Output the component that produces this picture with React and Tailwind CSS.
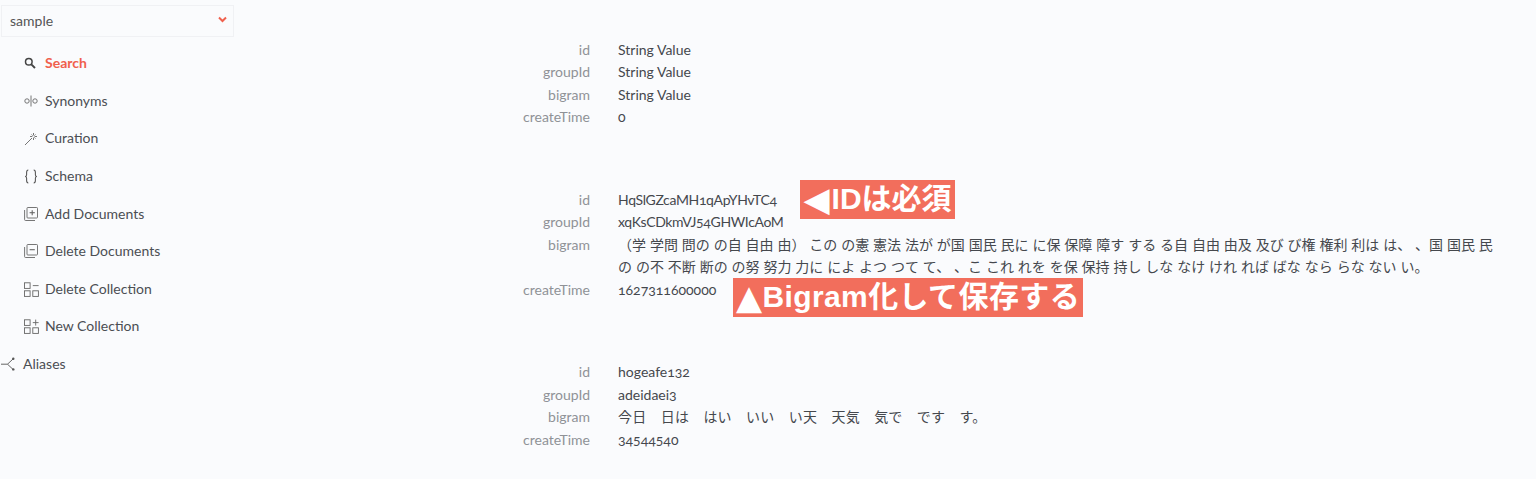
import React from 'react';

const SearchIcon = () => (
  <svg width="12" height="12" viewBox="0 0 12 12" fill="none" stroke="#444" strokeWidth="1.5">
    <circle cx="4.8" cy="4.8" r="3.3" />
    <path d="M7.3 7.3 L11 11" strokeWidth="1.9" />
  </svg>
);

const SynonymsIcon = () => (
  <svg width="14" height="14" viewBox="0 0 14 14" fill="none" stroke="#666" strokeWidth="0.9">
    <circle cx="3" cy="7" r="2.2" />
    <circle cx="11" cy="7" r="2.2" />
    <path d="M7 1.5 V12.5" />
  </svg>
);

const WandIcon = () => (
  <svg width="14" height="14" viewBox="0 0 14 14" fill="none" stroke="#666" strokeWidth="0.9">
    <path d="M1 13 L8 6" />
    <path d="M9.5 1 V3.4 M9.5 5.6 V8 M6 4.5 H8.4 M10.6 4.5 H13 M7.5 2.5 L8.6 3.6 M11.5 2.5 L10.4 3.6 M11.5 6.5 L10.4 5.4" />
  </svg>
);

const BracesIcon = () => (
  <svg width="14" height="15" viewBox="0 0 13 14" fill="none" stroke="#555" strokeWidth="1">
    <path d="M4 1 C2.4 1 2.4 2 2.4 3.2 V5.4 C2.4 6.4 1.8 7 1 7 C1.8 7 2.4 7.6 2.4 8.6 V10.8 C2.4 12 2.4 13 4 13" />
    <path d="M9 1 C10.6 1 10.6 2 10.6 3.2 V5.4 C10.6 6.4 11.2 7 12 7 C11.2 7 10.6 7.6 10.6 8.6 V10.8 C10.6 12 10.6 13 9 13" />
  </svg>
);

const DocsIcon = ({ plus }) => (
  <svg width="14" height="14" viewBox="0 0 14 14" fill="none" stroke="#666" strokeWidth="0.9">
    <rect x="3" y="0.5" width="10.5" height="10.5" rx="0.8" />
    <path d="M0.6 3 V12.6 C0.6 13.2 0.9 13.5 1.5 13.5 H11" />
    <path d="M5.6 5.7 H10.8" strokeWidth="1.1" />
    {plus && <path d="M8.2 3.2 V8.2" strokeWidth="1.1" />}
  </svg>
);

const CollectionIcon = ({ plus }) => (
  <svg width="15" height="15" viewBox="0 0 15 15" fill="none" stroke="#666" strokeWidth="0.9">
    <rect x="0.5" y="0.8" width="5.6" height="5.6" />
    <rect x="0.5" y="8.8" width="5.6" height="5.6" />
    <rect x="8.8" y="8.8" width="5.6" height="5.6" />
    <path d="M8.8 3.6 H14.6" />
    {plus && <path d="M11.7 0.6 V6.6" />}
  </svg>
);

const AliasIcon = () => (
  <svg width="16" height="14" viewBox="0 0 16 14" fill="none" stroke="#555" strokeWidth="0.9">
    <path d="M0 7.2 H6.5 L12 2 M6.5 7.2 L12 12.4" />
    <circle cx="12.3" cy="1.8" r="1.2" fill="#555" stroke="none" />
    <circle cx="12.3" cy="12.4" r="1.2" fill="#555" stroke="none" />
  </svg>
);

const navItems = [
  { label: 'Search', icon: <SearchIcon />, active: true },
  { label: 'Synonyms', icon: <SynonymsIcon /> },
  { label: 'Curation', icon: <WandIcon /> },
  { label: 'Schema', icon: <BracesIcon /> },
  { label: 'Add Documents', icon: <DocsIcon plus /> },
  { label: 'Delete Documents', icon: <DocsIcon /> },
  { label: 'Delete Collection', icon: <CollectionIcon /> },
  { label: 'New Collection', icon: <CollectionIcon plus /> },
];

const docs = [
  { id: 'String Value', groupId: 'String Value', bigram: 'String Value', createTime: '0' },
  {
    id: 'HqSlGZcaMH1qApYHvTC4',
    groupId: 'xqKsCDkmVJ54GHWIcAoM',
    bigram: '（学 学問 問の の自 自由 由） この の憲 憲法 法が が国 国民 民に に保 保障 障す する る自 自由 由及 及び び権 権利 利は は、 、国 国民 民 の の不 不断 断の の努 努力 力に によ よつ つて て、 、こ これ れを を保 保持 持し しな なけ けれ れば ばな なら らな ない い。',
    createTime: '1627311600000',
    idClass: 'tracking-[-0.35px]',
    bigramClass: '[word-spacing:0.3px]',
  },
  {
    id: 'hogeafe132',
    groupId: 'adeidaei3',
    bigram: '今日　日は　はい　いい　い天　天気　気で　です　す。',
    createTime: '34544540',
    bigramClass: 'tracking-[0.23px]',
  },
];

const Row = ({ label, children }) => (
  <div className="flex">
    <div className="w-[90px] shrink-0 text-right text-[#8f9297]">{label}</div>
    <div className="ml-7 flex-1 min-w-0 text-[#45484d]">{children}</div>
  </div>
);

export default function App() {
  return (
    <div className="flex h-[479px] overflow-hidden bg-[#fafbfd] text-[14px] leading-[22.4px] oldstyle-nums font-['Lato','Noto_Sans_CJK_JP',sans-serif]">
      <aside className="ml-px w-[233px] shrink-0 pt-[5px]">
        <div className="flex h-[32px] items-center justify-between border border-[#f0f1f4] pl-2 pr-[6px] pt-px text-[#555]">
          <span>sample</span>
          <svg width="9" height="7" viewBox="0 0 9 7" fill="none" stroke="#f0604d" strokeWidth="2" className="-mt-[5px]">
            <path d="M1 1.5 L4.5 5 L8 1.5" />
          </svg>
        </div>
        <nav className="mt-[7.7px]">
          {navItems.map((item) => (
            <div key={item.label} className="flex h-[37.6px] items-center pl-[23px]">
              <span className="flex w-[21px] shrink-0 items-center">{item.icon}</span>
              <span className={item.active ? 'font-bold text-[#f0604d]' : 'text-[#4b4e53]'}>{item.label}</span>
            </div>
          ))}
          <div className="flex h-[37.6px] items-center">
            <span className="flex w-[22px] shrink-0 items-center"><AliasIcon /></span>
            <span className="text-[#4b4e53]">Aliases</span>
          </div>
        </nav>
      </aside>

      <main className="relative flex-1 pl-[266px] pr-[36px] pt-[39px]">
        {docs.map((doc) => (
          <div key={doc.id} className="mb-[60.4px]">
            <Row label="id"><span className={doc.idClass}>{doc.id}</span></Row>
            <Row label="groupId"><span className={doc.idClass}>{doc.groupId}</span></Row>
            <Row label="bigram"><span className={doc.bigramClass}>{doc.bigram}</span></Row>
            <Row label="createTime">{doc.createTime}</Row>
          </div>
        ))}
        <div className="absolute left-[566px] top-[180px] flex h-[39px] w-[155px] items-center justify-center gap-[2px] whitespace-nowrap bg-[#f26e5c] text-[30px] font-bold text-white font-['Liberation_Sans','Noto_Sans_CJK_JP',sans-serif]">
          <span className="text-[34px] font-['DejaVu_Sans']">◀</span>
          <span>IDは必須</span>
        </div>
        <div className="absolute left-[499px] top-[278px] flex h-[39px] w-[350px] items-center justify-center whitespace-nowrap bg-[#f26e5c] text-[30px] font-bold tracking-[0.4px] text-white font-['Liberation_Sans','Noto_Sans_CJK_JP',sans-serif]">
          <span className="text-[34px] font-['DejaVu_Sans']">▲</span>
          <span>Bigram化して保存する</span>
        </div>
      </main>
    </div>
  );
}
